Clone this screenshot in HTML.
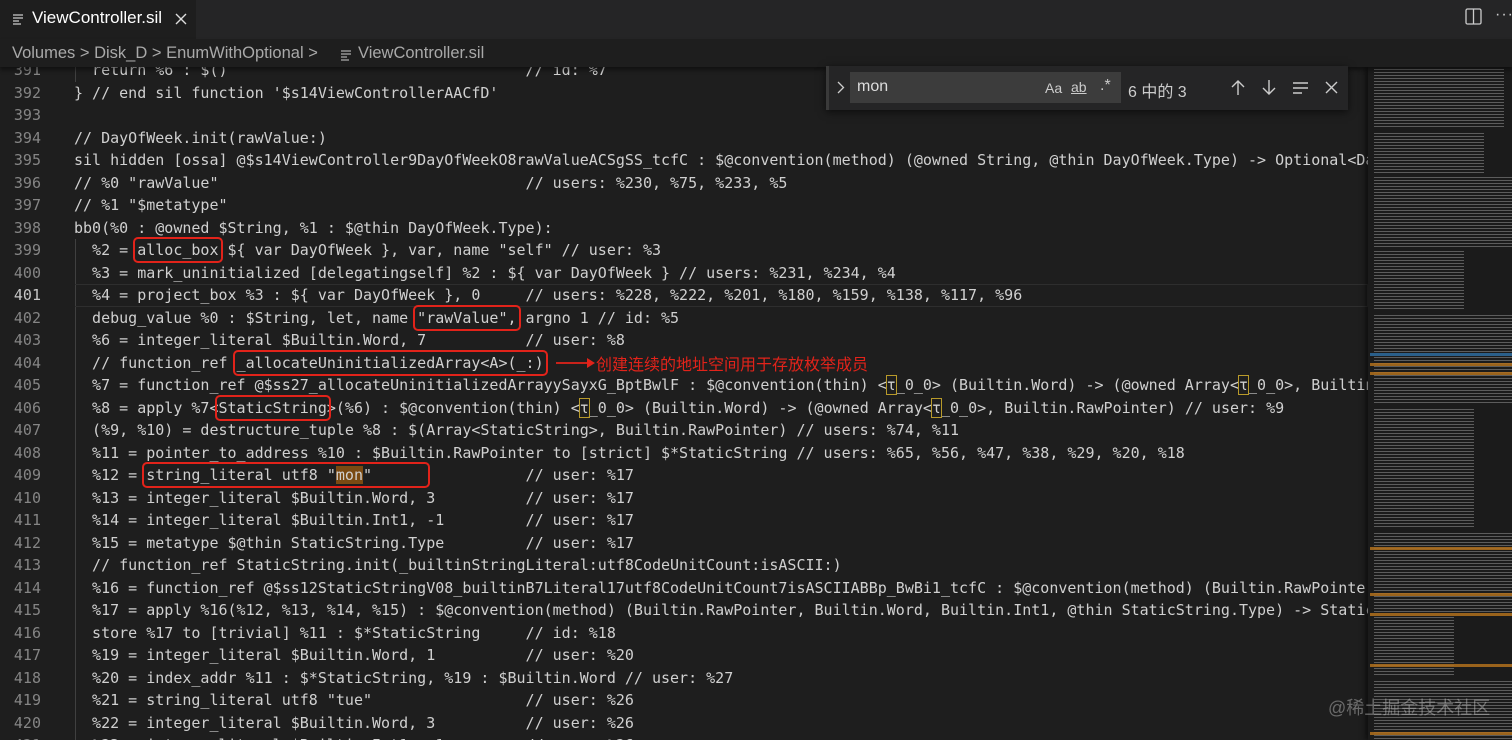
<!DOCTYPE html>
<html><head><meta charset="utf-8">
<style>
*{margin:0;padding:0;box-sizing:border-box}
html,body{width:1512px;height:740px;overflow:hidden}
body{background:#1e1e1e;position:relative;font-family:"Liberation Sans","Noto Sans CJK SC",sans-serif}
#tabs{position:absolute;left:0;top:0;width:1512px;height:39px;background:#252526}
#tab{position:absolute;left:0;top:0;width:196px;height:39px;background:#1e1e1e;color:#fff;font-size:17px}
#crumb{position:absolute;left:0;top:39px;width:1512px;height:28px;background:#1e1e1e;color:#a9a9a9;font-size:16.5px;z-index:5;box-shadow:0 3px 4px rgba(0,0,0,.45)}
#code{position:absolute;left:0;top:59px;width:1368px;height:681px;overflow:hidden;font-family:"DejaVu Sans Mono","Liberation Mono",monospace;font-size:15px;line-height:22.52px;color:#d0d0d0}
.l{position:relative;height:22.52px;white-space:pre}
.n{position:absolute;left:0;width:41px;text-align:right;color:#858585}
.t{position:absolute;left:74px}
.cur{position:absolute;left:75px;right:0;top:0;height:22.52px;border:1px solid #2e2e2e;border-left:none}
.guide{position:absolute;left:75px;width:1px;background:#404040}
.r{position:relative}
.r::after{content:"";position:absolute;left:-4px;right:-4px;top:-4px;bottom:-4px;border:2px solid #e2231a;border-radius:5px}
.y{outline:1.5px solid #b89a2a;outline-offset:0}
.m{background:#7a4a12}
#mini{position:absolute;left:1368px;top:67px;width:144px;height:673px;background:#1b1b1b;box-shadow:-3px 0 5px rgba(0,0,0,.5);overflow:hidden}
.mb{position:absolute;background:repeating-linear-gradient(to bottom,rgba(170,170,170,.45) 0 1px,transparent 1px 3px)}
.ob{position:absolute;left:2px;width:142px;height:3px;background:#b0701c;opacity:.85}
#find{position:absolute;left:826px;top:66px;width:522px;height:44px;background:#252526;box-shadow:0 2px 8px rgba(0,0,0,.6);z-index:6;color:#ccc;border-left:3px solid #3a3a3a}
</style></head><body>
<div id="tabs">
 <div id="tab">
  <svg style="position:absolute;left:12px;top:13px" width="12" height="12" viewBox="0 0 12 12"><path d="M1 2h10M1 5h10M1 8h6M1 11h8" stroke="#ccc" stroke-width="1.2"/></svg>
  <span style="position:absolute;left:32px;top:8px">ViewController.sil</span>
  <svg style="position:absolute;left:174px;top:12px" width="14" height="14" viewBox="0 0 14 14"><path d="M2 2L12 12M12 2L2 12" stroke="#ddd" stroke-width="1.4"/></svg>
 </div>
 <svg style="position:absolute;left:1465px;top:8px" width="17" height="17" viewBox="0 0 17 17"><rect x="1" y="1" width="15" height="15" rx="1.5" fill="none" stroke="#ccc" stroke-width="1.3"/><path d="M8.5 1v15" stroke="#ccc" stroke-width="1.3"/></svg>
 <span style="position:absolute;left:1495px;top:6px;color:#ccc;font-size:16px;letter-spacing:1px">···</span>
</div>
<div id="crumb">
 <span style="position:absolute;left:12px;top:5px">Volumes &gt; Disk_D &gt; EnumWithOptional &gt;</span>
 <svg style="position:absolute;left:340px;top:10px" width="12" height="12" viewBox="0 0 12 12"><path d="M1 2h10M1 5h10M1 8h6M1 11h8" stroke="#aaa" stroke-width="1.2"/></svg>
 <span style="position:absolute;left:358px;top:5px">ViewController.sil</span>
</div>

<div id="code">
<div class="guide" style="top:0;height:22.52px"></div>
<div class="guide" style="top:180px;height:520px"></div>
<div class="l"><span class="n">391</span><span class="t">  return %6 : $()                                 // id: %7</span></div>
<div class="l"><span class="n">392</span><span class="t">} // end sil function '$s14ViewControllerAACfD'</span></div>
<div class="l"><span class="n">393</span><span class="t"></span></div>
<div class="l"><span class="n">394</span><span class="t">// DayOfWeek.init(rawValue:)</span></div>
<div class="l"><span class="n">395</span><span class="t">sil hidden [ossa] @$s14ViewController9DayOfWeekO8rawValueACSgSS_tcfC : $@convention(method) (@owned String, @thin DayOfWeek.Type) -&gt; Optional&lt;DayOfWeek&gt; {</span></div>
<div class="l"><span class="n">396</span><span class="t">// %0 "rawValue"                                  // users: %230, %75, %233, %5</span></div>
<div class="l"><span class="n">397</span><span class="t">// %1 "$metatype"</span></div>
<div class="l"><span class="n">398</span><span class="t">bb0(%0 : @owned $String, %1 : $@thin DayOfWeek.Type):</span></div>
<div class="l"><span class="n">399</span><span class="t">  %2 = <span class="r">alloc_box</span> ${ var DayOfWeek }, var, name "self" // user: %3</span></div>
<div class="l"><span class="n">400</span><span class="t">  %3 = mark_uninitialized [delegatingself] %2 : ${ var DayOfWeek } // users: %231, %234, %4</span></div>
<div class="l"><div class="cur"></div><span class="n" style="color:#c6c6c6">401</span><span class="t">  %4 = project_box %3 : ${ var DayOfWeek }, 0     // users: %228, %222, %201, %180, %159, %138, %117, %96</span></div>
<div class="l"><span class="n">402</span><span class="t">  debug_value %0 : $String, let, name <span class="r">"rawValue",</span> argno 1 // id: %5</span></div>
<div class="l"><span class="n">403</span><span class="t">  %6 = integer_literal $Builtin.Word, 7           // user: %8</span></div>
<div class="l"><span class="n">404</span><span class="t">  // function_ref <span class="r">_allocateUninitializedArray&lt;A&gt;(_:)</span></span>
 <svg style="position:absolute;left:556px;top:5px" width="40" height="12" viewBox="0 0 40 12"><path d="M0 6H32" stroke="#e2231a" stroke-width="1.8"/><path d="M31 1L39 6L31 11Z" fill="#e2231a"/></svg>
 <span style="position:absolute;left:596px;top:0;color:#e2231a;font-family:'Noto Sans CJK SC',sans-serif;font-size:16px">创建连续的地址空间用于存放枚举成员</span></div>
<div class="l"><span class="n">405</span><span class="t">  %7 = function_ref @$ss27_allocateUninitializedArrayySayxG_BptBwlF : $@convention(thin) &lt;<span class="y">τ</span>_0_0&gt; (Builtin.Word) -&gt; (@owned Array&lt;<span class="y">τ</span>_0_0&gt;, Builtin.RawPointer) // user: %8</span></div>
<div class="l"><span class="n">406</span><span class="t">  %8 = apply %7&lt;<span class="r">StaticString</span>&gt;(%6) : $@convention(thin) &lt;<span class="y">τ</span>_0_0&gt; (Builtin.Word) -&gt; (@owned Array&lt;<span class="y">τ</span>_0_0&gt;, Builtin.RawPointer) // user: %9</span></div>
<div class="l"><span class="n">407</span><span class="t">  (%9, %10) = destructure_tuple %8 : $(Array&lt;StaticString&gt;, Builtin.RawPointer) // users: %74, %11</span></div>
<div class="l"><span class="n">408</span><span class="t">  %11 = pointer_to_address %10 : $Builtin.RawPointer to [strict] $*StaticString // users: %65, %56, %47, %38, %29, %20, %18</span></div>
<div class="l"><span class="n">409</span><span class="t">  %12 = <span class="r">string_literal utf8 "<span class="m">mon</span>"      </span>           // user: %17</span></div>
<div class="l"><span class="n">410</span><span class="t">  %13 = integer_literal $Builtin.Word, 3          // user: %17</span></div>
<div class="l"><span class="n">411</span><span class="t">  %14 = integer_literal $Builtin.Int1, -1         // user: %17</span></div>
<div class="l"><span class="n">412</span><span class="t">  %15 = metatype $@thin StaticString.Type         // user: %17</span></div>
<div class="l"><span class="n">413</span><span class="t">  // function_ref StaticString.init(_builtinStringLiteral:utf8CodeUnitCount:isASCII:)</span></div>
<div class="l"><span class="n">414</span><span class="t">  %16 = function_ref @$ss12StaticStringV08_builtinB7Literal17utf8CodeUnitCount7isASCIIABBp_BwBi1_tcfC : $@convention(method) (Builtin.RawPointer, Builtin.Word, Builtin.Int1, @thin StaticString.Type) -&gt; StaticString // user: %17</span></div>
<div class="l"><span class="n">415</span><span class="t">  %17 = apply %16(%12, %13, %14, %15) : $@convention(method) (Builtin.RawPointer, Builtin.Word, Builtin.Int1, @thin StaticString.Type) -&gt; StaticString // user: %18</span></div>
<div class="l"><span class="n">416</span><span class="t">  store %17 to [trivial] %11 : $*StaticString     // id: %18</span></div>
<div class="l"><span class="n">417</span><span class="t">  %19 = integer_literal $Builtin.Word, 1          // user: %20</span></div>
<div class="l"><span class="n">418</span><span class="t">  %20 = index_addr %11 : $*StaticString, %19 : $Builtin.Word // user: %27</span></div>
<div class="l"><span class="n">419</span><span class="t">  %21 = string_literal utf8 "tue"                 // user: %26</span></div>
<div class="l"><span class="n">420</span><span class="t">  %22 = integer_literal $Builtin.Word, 3          // user: %26</span></div>
<div class="l"><span class="n">421</span><span class="t">  %23 = integer_literal $Builtin.Int1, -1         // user: %26</span></div>
</div>

<div id="mini">
 <div class="mb" style="left:6px;top:2px;width:130px;height:60px"></div>
 <div class="mb" style="left:6px;top:66px;width:110px;height:40px"></div>
 <div class="mb" style="left:6px;top:110px;width:138px;height:70px"></div>
 <div class="mb" style="left:6px;top:184px;width:90px;height:60px"></div>
 <div class="mb" style="left:6px;top:248px;width:138px;height:90px"></div>
 <div class="mb" style="left:6px;top:342px;width:100px;height:120px"></div>
 <div class="mb" style="left:6px;top:466px;width:138px;height:80px"></div>
 <div class="mb" style="left:6px;top:550px;width:80px;height:60px"></div>
 <div class="mb" style="left:6px;top:614px;width:138px;height:59px"></div>
 <div style="position:absolute;left:2px;top:286px;width:142px;height:3px;background:#2a5f8a"></div>
 <div class="ob" style="top:296px"></div>
 <div class="ob" style="top:305px"></div>
 <div class="ob" style="top:480px"></div>
 <div class="ob" style="top:526px"></div>
 <div class="ob" style="top:546px"></div>
 <div class="ob" style="top:597px"></div>
 <div class="ob" style="top:665px"></div>
</div>

<div id="find">
 <svg style="position:absolute;left:8px;top:15px" width="8" height="13" viewBox="0 0 8 13"><path d="M1 1L6.5 6.5L1 12" stroke="#ccc" stroke-width="1.3" fill="none"/></svg>
 <div style="position:absolute;left:21px;top:6px;width:271px;height:31px;background:#3c3c3c">
  <span style="position:absolute;left:7px;top:6px;font-size:16px;color:#ddd">mon</span>
  <span style="position:absolute;left:195px;top:8px;font-size:14px;color:#ccc">Aa</span>
  <span style="position:absolute;left:221px;top:7px;font-size:14px;color:#ccc;text-decoration:underline">ab</span>
  <span style="position:absolute;left:250px;top:5px;font-size:16px;color:#ccc">.*</span>
 </div>
 <span style="position:absolute;left:299px;top:12px;font-size:16px;color:#ccc;font-family:'Liberation Sans','Noto Sans CJK SC',sans-serif">6 中的 3</span>
 <svg style="position:absolute;left:402px;top:13px" width="14" height="17" viewBox="0 0 14 17"><path d="M7 16V2M1 8L7 2L13 8" stroke="#ccc" stroke-width="1.4" fill="none"/></svg>
 <svg style="position:absolute;left:433px;top:13px" width="14" height="17" viewBox="0 0 14 17"><path d="M7 1V15M1 9L7 15L13 9" stroke="#ccc" stroke-width="1.4" fill="none"/></svg>
 <svg style="position:absolute;left:463px;top:15px" width="17" height="14" viewBox="0 0 17 14"><path d="M1 2H16M1 7H16M1 12H10" stroke="#ccc" stroke-width="1.4"/></svg>
 <svg style="position:absolute;left:496px;top:15px" width="13" height="13" viewBox="0 0 13 13"><path d="M1 1L12 12M12 1L1 12" stroke="#ccc" stroke-width="1.4"/></svg>
</div>

<div style="position:absolute;left:1328px;top:694px;font-size:18px;color:rgba(200,200,200,.45);font-family:'Liberation Sans','Noto Sans CJK SC',sans-serif;z-index:7">@稀土掘金技术社区</div>
</body></html>
